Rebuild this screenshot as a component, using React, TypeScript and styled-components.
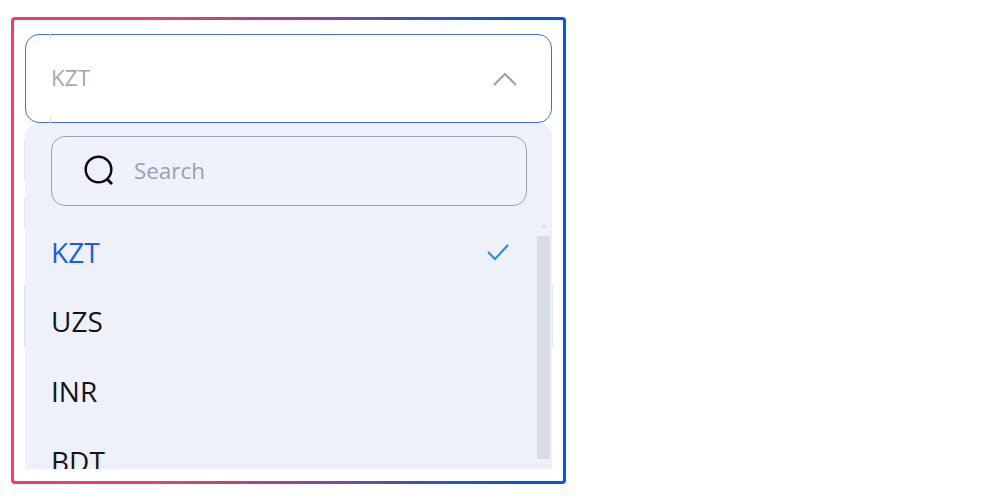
import React from "react";
import styled, { createGlobalStyle } from "styled-components";

const Global = createGlobalStyle`
  html, body { margin: 0; padding: 0; background: #fff; }
  body { font-family: "Open Sans", "Noto Sans", sans-serif; }
`;

const Page = styled.div`
  width: 1000px;
  height: 500px;
  overflow: hidden;
  padding: 17px 0 0 11px;
  box-sizing: border-box;
`;

const Frame = styled.div`
  position: relative;
  width: 555px;
  height: 467px;
  box-sizing: border-box;
  padding: 14px 11px 12px;
  border: 3px solid transparent;
  border-radius: 4px;
  background:
    linear-gradient(#fff, #fff) padding-box,
    linear-gradient(90deg, #fa3a66 0%, #fa3a66 25%, #0058e6 90%, #0058e6 100%) border-box;
  display: flex;
  flex-direction: column;
`;

const SelectBox = styled.div`
  height: 89px;
  flex: none;
  box-sizing: border-box;
  border: 1px solid #3f70d4;
  border-radius: 14px;
  background: #fff;
  display: flex;
  align-items: center;
  justify-content: space-between;
  padding: 0 33px 0 25px;
`;

const SelectValue = styled.span`
  font-size: 22.5px;
  color: #a8a8a8;
  margin-bottom: 2px;
`;

const Dropdown = styled.div`
  flex: 1;
  min-height: 0;
  background: #eef1fa;
  border-radius: 14px 14px 0 0;
  padding-top: 13px;
  display: flex;
  flex-direction: column;
`;

const SearchBox = styled.div`
  height: 70px;
  flex: none;
  margin: 0 25px 0 26px;
  box-sizing: border-box;
  border: 1px solid #9a9eba;
  border-radius: 14px;
  display: flex;
  align-items: center;
  padding-left: 31px;
  gap: 19px;
`;

const SearchPlaceholder = styled.span`
  font-size: 22.4px;
  color: #9a9db8;
  margin-bottom: 2px;
`;

const Body = styled.div`
  flex: 1;
  min-height: 0;
  display: flex;
  margin-top: 11px;
`;

const Rows = styled.div`
  flex: 1;
  min-width: 0;
  overflow: hidden;
`;

const Row = styled.div<{ $active?: boolean }>`
  height: 69.6px;
  display: flex;
  align-items: center;
  justify-content: space-between;
  padding: 0 27px 0 26px;
  font-size: 28px;
  color: ${(p) => (p.$active ? "#1a5fe0" : "#14151a")};
`;

const Scrollbar = styled.div`
  width: 13px;
  margin-right: 2px;
  flex: none;
  display: flex;
  flex-direction: column;
  align-items: center;
  padding-top: 7px;
  padding-bottom: 10px;
  box-sizing: border-box;
`;

const ScrollArrow = styled.div`
  width: 0;
  height: 0;
  border-left: 3.5px solid transparent;
  border-right: 3.5px solid transparent;
  border-bottom: 4px solid #dcdfe8;
  margin-bottom: 8px;
`;

const ScrollThumb = styled.div`
  flex: 1;
  width: 100%;
  background: #d9dce6;
`;

const Tick = styled.div<{ $top: number; $left: number; $h: number; $c: string }>`
  position: absolute;
  top: ${(p) => p.$top}px;
  left: ${(p) => p.$left}px;
  width: 1px;
  height: ${(p) => p.$h}px;
  background: ${(p) => p.$c};
`;

export default function App() {
  return (
    <Page>
      <Global />
      <Frame>
        <SelectBox>
          <SelectValue>KZT</SelectValue>
          <svg width="26" height="16" viewBox="0 0 26 16" fill="none">
            <path d="M2 14L13 3L24 14" stroke="#a0a0a0" strokeWidth="2.2" />
          </svg>
        </SelectBox>
        <Dropdown>
          <SearchBox>
            <svg width="32" height="32" viewBox="0 0 32 32" fill="none">
              <circle cx="15.5" cy="14.5" r="12.8" stroke="#0c0c10" strokeWidth="2.5" />
              <path d="M23.5 23.5L29 29" stroke="#0c0c10" strokeWidth="2.8" />
            </svg>
            <SearchPlaceholder>Search</SearchPlaceholder>
          </SearchBox>
          <Body>
            <Rows>
              <Row $active>
                KZT
                <svg width="24" height="20" viewBox="0 0 24 20" fill="none">
                  <path d="M2 10L9 17L22 3" stroke="#1a8fe8" strokeWidth="2" />
                </svg>
              </Row>
              <Row>UZS</Row>
              <Row>INR</Row>
              <Row>BDT</Row>
            </Rows>
            <Scrollbar>
              <ScrollArrow />
              <ScrollThumb />
            </Scrollbar>
          </Body>
        </Dropdown>
        <Tick $top={14} $left={36} $h={6} $c="#e2e4ea" />
        <Tick $top={96} $left={36} $h={7} $c="#e2e4ea" />
        <Tick $top={120} $left={10} $h={40} $c="#e4e6f0" />
        <Tick $top={178} $left={10} $h={30} $c="#e4e6f0" />
        <Tick $top={265} $left={10} $h={62} $c="#dde0f2" />
        <Tick $top={265} $left={538} $h={62} $c="#e4e6f0" />
      </Frame>
    </Page>
  );
}
